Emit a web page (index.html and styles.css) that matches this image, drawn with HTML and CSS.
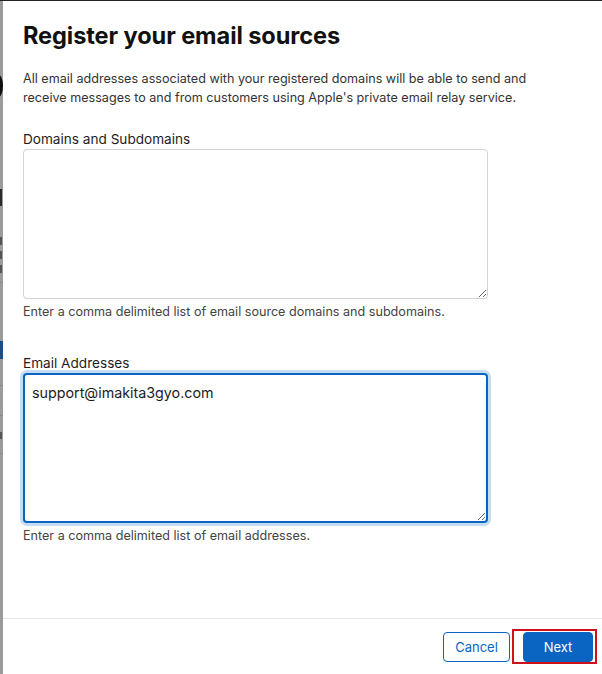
FILE: index.html
```html
<!DOCTYPE html>
<html lang="en">
<head>
<meta charset="utf-8">
<title>Register your email sources</title>
<link rel="stylesheet" href="styles.css">
</head>
<body>
<div class="screen">
  <div class="backdrop">
    <span class="bd-blob"></span>
    <span class="bd-i"></span>
    <span class="bd-txt t1"></span>
    <span class="bd-txt t2"></span>
    <span class="bd-txt t3"></span>
    <span class="bd-line l1"></span>
    <span class="bd-blue"></span>
    <span class="bd-line l2"></span>
    <span class="bd-line l3"></span>
    <span class="bd-txt t4"></span>
    <span class="bd-line l4"></span>
  </div>
  <div class="modal">
    <div class="content">
      <h1 class="title">Register your email sources</h1>
      <p class="intro">All email addresses associated with your registered domains will be able to send and receive messages to and from customers using Apple's private email relay service.</p>
      <div class="field">
        <label class="label">Domains and Subdomains</label>
        <textarea class="area"></textarea>
        <div class="help">Enter a comma delimited list of email source domains and subdomains.</div>
      </div>
      <div class="field field-2">
        <label class="label">Email Addresses</label>
        <textarea class="area focused">support@imakita3gyo.com</textarea>
        <div class="help">Enter a comma delimited list of email addresses.</div>
      </div>
    </div>
    <div class="footer">
      <button class="btn btn-cancel">Cancel</button>
      <span class="highlight"><button class="btn btn-next">Next</button></span>
    </div>
  </div>
</div>
</body>
</html>
```
FILE: styles.css
```css
* { box-sizing: border-box; }
html, body { margin: 0; padding: 0; }
body {
  width: 602px;
  height: 674px;
  overflow: hidden;
  font-family: "Inter", "Liberation Sans", Arial, sans-serif;
  color: #1d1d1f;
  background: #fff;
}
.screen {
  display: flex;
  width: 602px;
  height: 674px;
  border-top: 1px solid #222;
}
.backdrop {
  position: relative;
  width: 3px;
  flex: none;
  background: #9b9b9b;
  overflow: hidden;
}
.bd-blob { position: absolute; left: -6px; top: 74px; width: 9px; height: 22px; border-radius: 50%; background: #111; }
.bd-i { position: absolute; left: 0; top: 188px; width: 2px; height: 17px; background: #2a2a2a; }
.bd-txt { position: absolute; left: 0; width: 2px; height: 8px; background: #555; }
.t1 { top: 236px; }
.t2 { top: 250px; }
.t3 { top: 264px; }
.t4 { top: 431px; height: 7px; }
.bd-line { position: absolute; left: 0; width: 3px; height: 1px; background: #8a8a8a; }
.l1 { top: 281px; }
.l2 { top: 384px; }
.l3 { top: 414px; }
.l4 { top: 452px; }
.bd-blue { position: absolute; left: 0; top: 340px; width: 3px; height: 18px; background: #1a4f86; }
.modal {
  flex: 1;
  display: flex;
  flex-direction: column;
  background: #fff;
}
.content {
  flex: 1;
  padding: 20px 20px 0 20px;
}
.title {
  margin: 0;
  font-size: 23.6px;
  font-weight: 700;
  line-height: 30px;
  color: #111;
  letter-spacing: -0.1px;
}
.intro {
  margin: 18px 0 0 0;
  width: 520px;
  font-size: 12.6px;
  line-height: 19px;
  color: #333;
}
.field {
  margin-top: 23px;
  width: 465px;
}
.field-2 { margin-top: 34px; }
.label {
  display: block;
  font-size: 13.6px;
  line-height: 18px;
  color: #1d1d1f;
  margin-bottom: 1px;
}
.area {
  display: block;
  width: 465px;
  height: 150px;
  border: 1px solid #d2d2d7;
  border-radius: 4px;
  background: #fff;
  resize: vertical;
  font-family: inherit;
  font-size: 14.3px;
  line-height: 20px;
  color: #1d1d1f;
  padding: 8px 8px;
  margin: 0;
  outline: none;
}
.area.focused {
  border: 2px solid #0a64c2;
  box-shadow: 0 0 0 3px #c6dcf2;
  padding: 8px 7px;
}
.help {
  margin-top: 5px;
  font-size: 12.6px;
  line-height: 16px;
  color: #444;
}
.footer {
  height: 56px;
  border-top: 1px solid #e6e6e6;
  display: flex;
  align-items: center;
  justify-content: flex-end;
  gap: 2px;
  padding-right: 5px;
}
.btn {
  font-family: inherit;
  font-size: 13px;
  height: 30px;
  border-radius: 4px;
  cursor: pointer;
  padding: 0;
}
.btn-cancel {
  width: 67px;
  background: #fff;
  border: 1px solid #0a64c2;
  color: #0a64c2;
}
.highlight {
  display: flex;
  padding: 1px 2px 0 9px;
  border: 2px solid #d0101a;
}
.btn-next {
  width: 70px;
  background: #0a64c2;
  border: 1px solid #0a64c2;
  color: #fff;
}
```
